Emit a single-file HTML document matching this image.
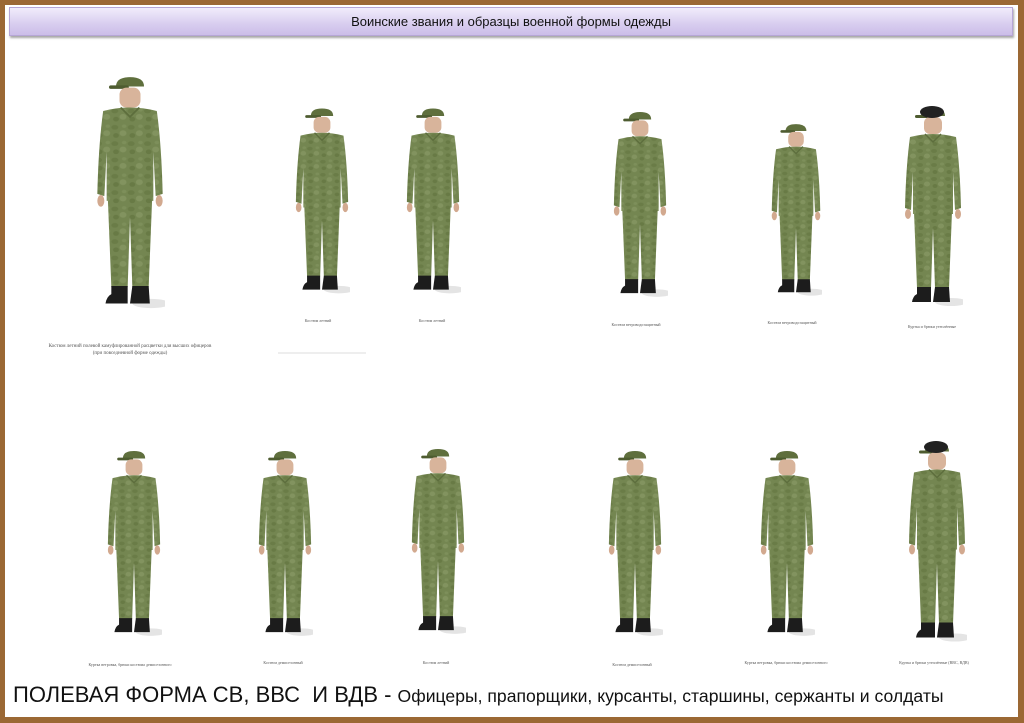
<!DOCTYPE html>
<html><head><meta charset="utf-8">
<style>
html,body{margin:0;padding:0}
body{width:1024px;height:723px;background:#9b6834;position:relative;overflow:hidden;font-family:"Liberation Sans",sans-serif}
#page{position:absolute;left:5px;top:5px;width:1013px;height:712px;background:#fff}
#hdr{position:absolute;left:9px;top:7px;width:1002px;height:27px;background:linear-gradient(#f1ecfb,#d8cdef 60%,#cbbde8);border:1px solid #b6a6d6;box-shadow:1px 2px 2px rgba(0,0,0,.35);text-align:center;font-size:13px;line-height:27px;color:#111}
.cap{position:absolute;font-family:"Liberation Serif",serif;font-size:4px;color:#555;text-align:center;transform:translateX(-50%);white-space:nowrap}
#bottom{position:absolute;left:13px;top:680px;font-size:22px;color:#111;white-space:nowrap;line-height:30px}
#bottom span{font-size:17.6px}
svg{position:absolute;left:0;top:0}
</style></head><body>
<div id="page"></div>
<div id="hdr">Воинские звания и образцы военной формы одежды</div>
<svg width="1024" height="723">
<defs>
<pattern id="cam" width="14" height="14" patternUnits="userSpaceOnUse">
<rect width="14" height="14" fill="#748651"/>
<ellipse cx="3" cy="3" rx="3" ry="2" fill="#6a7c47"/>
<ellipse cx="10" cy="8" rx="3" ry="2.5" fill="#82935f"/>
<ellipse cx="4" cy="10" rx="2.5" ry="2" fill="#687a45"/>
<ellipse cx="11" cy="2" rx="2" ry="1.5" fill="#7d8f5a"/>
</pattern>
<symbol id="s" viewBox="0 0 60 200">
<ellipse cx="48" cy="196" rx="16" ry="4" fill="#e4e4e4"/>
<path d="M18 10 Q18 2 30 2 Q42 2 42 10 Z" fill="#5f6f3d"/>
<rect x="12" y="9" width="17" height="3" rx="1.5" fill="#4e5c30"/>
<rect x="21" y="11" width="18" height="17" rx="6" fill="#d8b49b"/>
<path d="M7 31 Q30 25 53 31 Q57 60 58 102 L52 104 L50 66 L50 108 L10 108 L10 66 L8 104 L2 102 Q3 60 7 31 Z" fill="url(#cam)"/>
<path d="M22 28 L30 36 L38 28" stroke="#5d6e3d" stroke-width="1.5" fill="none"/>
<ellipse cx="5" cy="108" rx="3" ry="5" fill="#d2a98f"/>
<ellipse cx="55" cy="108" rx="3" ry="5" fill="#d2a98f"/>
<path d="M11 106 L49 106 L46 182 L32 182 L30 122 L28 182 L14 182 Z" fill="url(#cam)"/>
<path d="M14 181 L28 181 L28 196 L9 196 Q10 190 14 188 Z" fill="#1c1c1c"/>
<path d="M32 181 L46 181 L47 196 L30 196 Z" fill="#1c1c1c"/>
</symbol>
</defs>
<use href="#s" x="95" y="65" width="70" height="253" preserveAspectRatio="none"/>
<use href="#s" x="294" y="100" width="56" height="200" preserveAspectRatio="none"/>
<use href="#s" x="405" y="100" width="56" height="200" preserveAspectRatio="none"/>
<use href="#s" x="612" y="104" width="56" height="199" preserveAspectRatio="none"/>
<use href="#s" x="770" y="116" width="52" height="186" preserveAspectRatio="none"/>
<use href="#s" x="903" y="106" width="60" height="200" preserveAspectRatio="none"/>
<use href="#s" x="106" y="443" width="56" height="199" preserveAspectRatio="none"/>
<use href="#s" x="257" y="443" width="56" height="199" preserveAspectRatio="none"/>
<use href="#s" x="410" y="441" width="56" height="199" preserveAspectRatio="none"/>
<use href="#s" x="607" y="443" width="56" height="199" preserveAspectRatio="none"/>
<use href="#s" x="759" y="443" width="56" height="199" preserveAspectRatio="none"/>
<use href="#s" x="907" y="441" width="60" height="201" preserveAspectRatio="none"/>
<ellipse cx="932" cy="112" rx="12" ry="6" fill="#222"/>
<ellipse cx="936" cy="447" rx="12" ry="6" fill="#222"/>
<line x1="278" y1="353" x2="366" y2="353" stroke="#ddd" stroke-width="1"/>
</svg>
<div class="cap" style="left:130px;top:343px;font-size:5px;line-height:7px">Костюм летний полевой камуфлированной расцветки для высших офицеров<br>(при повседневной форме одежды)</div>
<div class="cap" style="left:318px;top:318px">Костюм летний</div>
<div class="cap" style="left:432px;top:318px">Костюм летний</div>
<div class="cap" style="left:636px;top:322px">Костюм ветроводозащитный</div>
<div class="cap" style="left:792px;top:320px">Костюм ветроводозащитный</div>
<div class="cap" style="left:932px;top:324px">Куртка и брюки утеплённые</div>
<div class="cap" style="left:130px;top:662px">Куртка ветровка, брюки костюма демисезонного</div>
<div class="cap" style="left:283px;top:660px">Костюм демисезонный</div>
<div class="cap" style="left:436px;top:660px">Костюм летний</div>
<div class="cap" style="left:632px;top:662px">Костюм демисезонный</div>
<div class="cap" style="left:786px;top:660px">Куртка ветровка, брюки костюма демисезонного</div>
<div class="cap" style="left:934px;top:660px">Куртка и брюки утеплённые (ВВС, ВДВ)</div>
<div id="bottom">ПОЛЕВАЯ ФОРМА СВ, ВВС&nbsp; И ВДВ - <span>Офицеры, прапорщики, курсанты, старшины, сержанты и солдаты</span></div>
</body></html>
